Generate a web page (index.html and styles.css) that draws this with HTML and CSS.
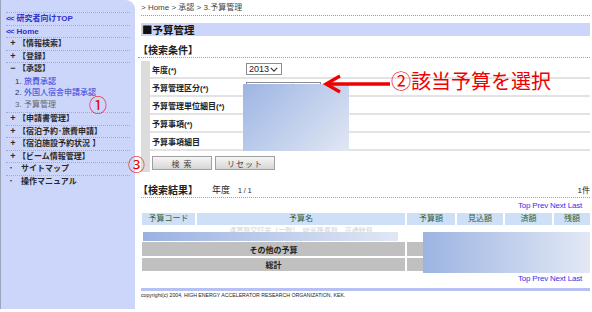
FILE: index.html
```html
<!DOCTYPE html>
<html lang="ja">
<head>
<meta charset="utf-8">
<title>予算管理</title>
<link rel="stylesheet" href="styles.css">
</head>
<body>
<div class="page">
  <aside class="side">
    <ul class="nav">
      <li class="item link"><span class="chev">&lt;&lt;</span> 研究者向けTOP</li>
      <li class="item link"><span class="chev">&lt;&lt;</span> Home</li>
      <li class="item cat"><span class="mark">+</span>【情報検索】</li>
      <li class="item cat"><span class="mark">+</span>【登録】</li>
      <li class="item group">
        <div class="cat"><span class="mark">−</span>【承認】</div>
        <ol class="sub">
          <li><span class="num">1.</span> <span class="lk">旅費承認</span></li>
          <li><span class="num">2.</span> <span class="lk">外国人宿舎申請承認</span></li>
          <li class="cur">3. 予算管理</li>
        </ol>
      </li>
      <li class="item cat"><span class="mark">+</span>【申請書管理】</li>
      <li class="item cat"><span class="mark">+</span>【宿泊予約･旅費申請】</li>
      <li class="item cat"><span class="mark">+</span>【宿泊施設予約状況 】</li>
      <li class="item cat"><span class="mark">+</span>【ビーム情報管理】</li>
      <li class="item cat"><span class="dot">･</span>サイトマップ</li>
      <li class="item cat"><span class="dot">･</span>操作マニュアル</li>
    </ul>
  </aside>

  <main class="main">
    <div class="crumb">&gt; Home &gt; 承認 &gt; 3.予算管理</div>
    <h1 class="title">■予算管理</h1>

    <h2 class="sec">【検索条件】</h2>
    <div class="form">
      <div class="frow">
        <div class="flabel">年度(*)</div>
        <div class="fval">
          <span class="sel sel-year">2013<svg class="caret" viewBox="0 0 10 6" width="8" height="5"><path d="M1 1 L5 5 L9 1" fill="none" stroke="#333" stroke-width="1.4"/></svg></span>
        </div>
      </div>
      <div class="frow">
        <div class="flabel">予算管理区分(*)</div>
        <div class="fval"><span class="sel sel-wide">運営費交付金</span></div>
      </div>
      <div class="frow"><div class="flabel">予算管理単位細目(*)</div><div class="fval"></div></div>
      <div class="frow"><div class="flabel">予算事項(*)</div><div class="fval"></div></div>
      <div class="frow"><div class="flabel">予算事項細目</div><div class="fval"></div></div>
      <div class="btns">
        <button class="btn" type="button">検 索</button>
        <button class="btn" type="button">リセット</button>
      </div>
    </div>

    <div class="reshead">
      <h2 class="sec sec-inline">【検索結果】</h2>
      <span class="yr">年度</span>
      <span class="pg">1 / 1</span>
      <span class="count">1件</span>
    </div>
    <div class="pager">Top Prev Next Last</div>

    <table class="res">
      <colgroup>
        <col class="c1"><col class="c2"><col class="c3"><col class="c4"><col class="c5"><col class="c6">
      </colgroup>
      <thead>
        <tr><th>予算コード</th><th>予算名</th><th>予算額</th><th>見込額</th><th>済額</th><th>残額</th></tr>
      </thead>
      <tbody>
        <tr class="drow"><td></td><td class="faint">運営費交付金（一般）　研究推進費　共通経費</td><td></td><td></td><td></td><td></td></tr>
        <tr class="grow"><td colspan="2">その他の予算</td><td></td><td></td><td></td><td></td></tr>
        <tr class="grow"><td colspan="2">総計</td><td></td><td></td><td></td><td></td></tr>
      </tbody>
    </table>
    <div class="pager pager2">Top Prev Next Last</div>

    <div class="footbar"></div>
    <div class="copy">copyright(c) 2004, HIGH ENERGY ACCELERATOR RESEARCH ORGANIZATION, KEK.</div>
  </main>

  <div class="mask mask-form"></div>
  <div class="mask mask-row"></div>
  <div class="mask mask-sum"></div>

  <span class="anno anno1">①</span>
  <span class="anno anno3">③</span>
  <svg class="arrow" viewBox="0 0 70 20" width="70" height="20">
    <path d="M4 10 L68 10" stroke="#ee0000" stroke-width="3.5" fill="none"/>
    <path d="M18 2 L4 10 L18 18" stroke="#ee0000" stroke-width="3.2" fill="none" stroke-linejoin="miter"/>
  </svg>
  <span class="anno anno2">②該当予算を選択</span>
</div>
</body>
</html>
```
FILE: styles.css
```css
* { box-sizing: border-box; }
html, body { margin: 0; padding: 0; background: #fff; }
body {
  font-family: "Liberation Sans", "Noto Sans CJK JP", sans-serif;
  color: #222;
  width: 592px;
  height: 312px;
  overflow: hidden;
}
.page {
  position: relative;
  display: flex;
  align-items: flex-start;
  width: 592px;
  height: 312px;
}

/* sidebar */
.side {
  width: 135px;
  height: 309px;
  flex: none;
  background: #ccd6fa;
  border-left: 1px solid #9ea4bc;
  border-top-right-radius: 9px;
  padding-top: 12px;
}
.nav {
  list-style: none;
  margin: 0;
  padding: 0 5px 0 5px;
}
.item {
  border-top: 1px dotted #a6a8c4;
  font-size: 8px;
  line-height: 11.5px;
  min-height: 12.5px;
  white-space: nowrap;
}
.link {
  color: #2f2fd0;
  font-weight: bold;
}
.chev { letter-spacing: -1px; margin-right: 1px; }
.cat { font-weight: bold; color: #2a2a2a; }
.mark {
  display: inline-block;
  width: 10px;
  margin-left: 2px;
  text-align: center;
  font-size: 9px;
}
.dot {
  display: inline-block;
  width: 12px;
  margin-left: 3px;
  text-align: left;
}
.group { padding-bottom: 2px; }
.sub {
  list-style: none;
  margin: 1px 0 0 0;
  padding: 0 0 0 9px;
  font-weight: normal;
}
.sub li { line-height: 11.5px; color: #333; }
.sub .lk { color: #3535d8; }
.sub .num { color: #333; }
.sub .cur { color: #666; }

/* main */
.main {
  width: 449px;
  margin-left: 6px;
  flex: none;
}
.crumb {
  height: 16px;
  line-height: 15px;
  font-size: 8px;
  color: #444;
  border-bottom: 1px dotted #9a9a9a;
}
.title {
  margin: 7px 0 0 0;
  height: 13px;
  line-height: 13px;
  font-family: "Noto Sans CJK JP", sans-serif;
  font-size: 10.5px;
  font-weight: bold;
  background: #ccd6fa;
  color: #111;
  padding-left: 1px;
}
.sec {
  margin: 8px 0 0 -3px;
  height: 14px;
  line-height: 14px;
  font-size: 10px;
  font-weight: bold;
  color: #222;
  border-bottom: 1px dotted #a0a0a0;
}
.form {
  margin-top: 3px;
  border-left: 9px solid #dcdcdc;
  padding-bottom: 2px;
}
.frow {
  display: flex;
  align-items: center;
  height: 18px;
  border-bottom: 2px solid #e3e3e3;
}
.flabel {
  width: 94px;
  padding-left: 2px;
  font-size: 8px;
  font-weight: bold;
  color: #222;
  white-space: nowrap;
}
.fval { display: flex; align-items: center; padding-left: 2px; }
.sel {
  display: inline-flex;
  align-items: center;
  justify-content: space-between;
  border: 1px solid #8c8c8c;
  background: #fff;
  font-size: 9px;
  color: #222;
  padding: 0 3px 0 2px;
}
.sel-year { width: 36px; height: 12px; }
.sel-wide { width: 75px; height: 11px; font-size: 8px; overflow: hidden; }
.caret { display: block; }
.btns {
  display: flex;
  gap: 3px;
  padding: 5px 0 0 2px;
}
.btn {
  width: 60px;
  height: 14px;
  padding: 0;
  font-family: "Liberation Sans", "Noto Sans CJK JP", sans-serif;
  font-size: 8px;
  color: #444;
  border: 1px solid #a0a0a0;
  background: linear-gradient(#f6f6f6, #d6d6d6);
  letter-spacing: 1px;
}

.reshead {
  display: flex;
  align-items: flex-end;
  margin-top: 12px;
  height: 14px;
  border-bottom: 1px dotted #a0a0a0;
}
.sec-inline {
  margin: 0 0 0 -3px;
  border-bottom: none;
  height: 13px;
  line-height: 13px;
}
.yr { font-size: 9px; margin-left: 14px; line-height: 13px; }
.pg { font-size: 7px; margin-left: 8px; line-height: 13px; }
.count { margin-left: auto; font-size: 8px; line-height: 13px; }

.pager {
  margin-top: 3px;
  height: 10px;
  line-height: 10px;
  font-size: 8px;
  color: #3434e8;
  text-align: right;
  padding-right: 8px;
  letter-spacing: -0.2px;
}
.pager2 { margin-top: 1px; }

.res {
  width: 452px;
  margin-left: -1px;
  border-collapse: separate;
  border-spacing: 2px;
  table-layout: fixed;
  font-size: 8px;
}
.c1 { width: 53px; }
.c2 { width: 208px; }
.c3 { width: 48px; }
.c4 { width: 46px; }
.c5 { width: 47px; }
.c6 { width: 36px; }
.res th {
  height: 12px;
  padding: 0;
  background: #cde0f8;
  color: #355e35;
  font-weight: normal;
  line-height: 12px;
}
.res td { padding: 0; }
.drow td { height: 13px; line-height: 6px; vertical-align: top; }
.faint { color: #d4d4d4; font-size: 7px; white-space: nowrap; overflow: hidden; text-align: center; }
.grow td {
  height: 14px;
  background: #c0c0c0;
  text-align: center;
  font-weight: bold;
  color: #222;
}
.grow + .grow td { height: 13px; }

.footbar {
  margin-top: 4px;
  height: 3px;
  background: #b6c0f2;
}
.copy {
  font-size: 5.2px;
  line-height: 8px;
  color: #222;
  white-space: nowrap;
}

/* redaction masks and red annotations overlaying the capture */
.mask { position: absolute; }
.mask-form {
  left: 243px; top: 84px; width: 106px; height: 67px;
  background: linear-gradient(135deg, #9db5e4, #e1e7f4);
}
.mask-row {
  left: 143px; top: 232px; width: 255px; height: 9px;
  background: linear-gradient(90deg, #9ab2e2, #e1e7f4);
}
.mask-sum {
  left: 423px; top: 232px; width: 167px; height: 41px;
  background: linear-gradient(90deg, #9cb4e2, #e3e8f5);
}
.anno {
  position: absolute;
  color: #ee0000;
  font-family: "Noto Sans CJK JP", sans-serif;
  line-height: 1;
}
.anno1 { left: 89px; top: 95px; font-size: 18px; }
.anno3 { left: 128px; top: 155px; font-size: 17px; }
.anno2 { left: 391px; top: 71px; font-size: 20px; }
.arrow { position: absolute; left: 322px; top: 74px; }
```
